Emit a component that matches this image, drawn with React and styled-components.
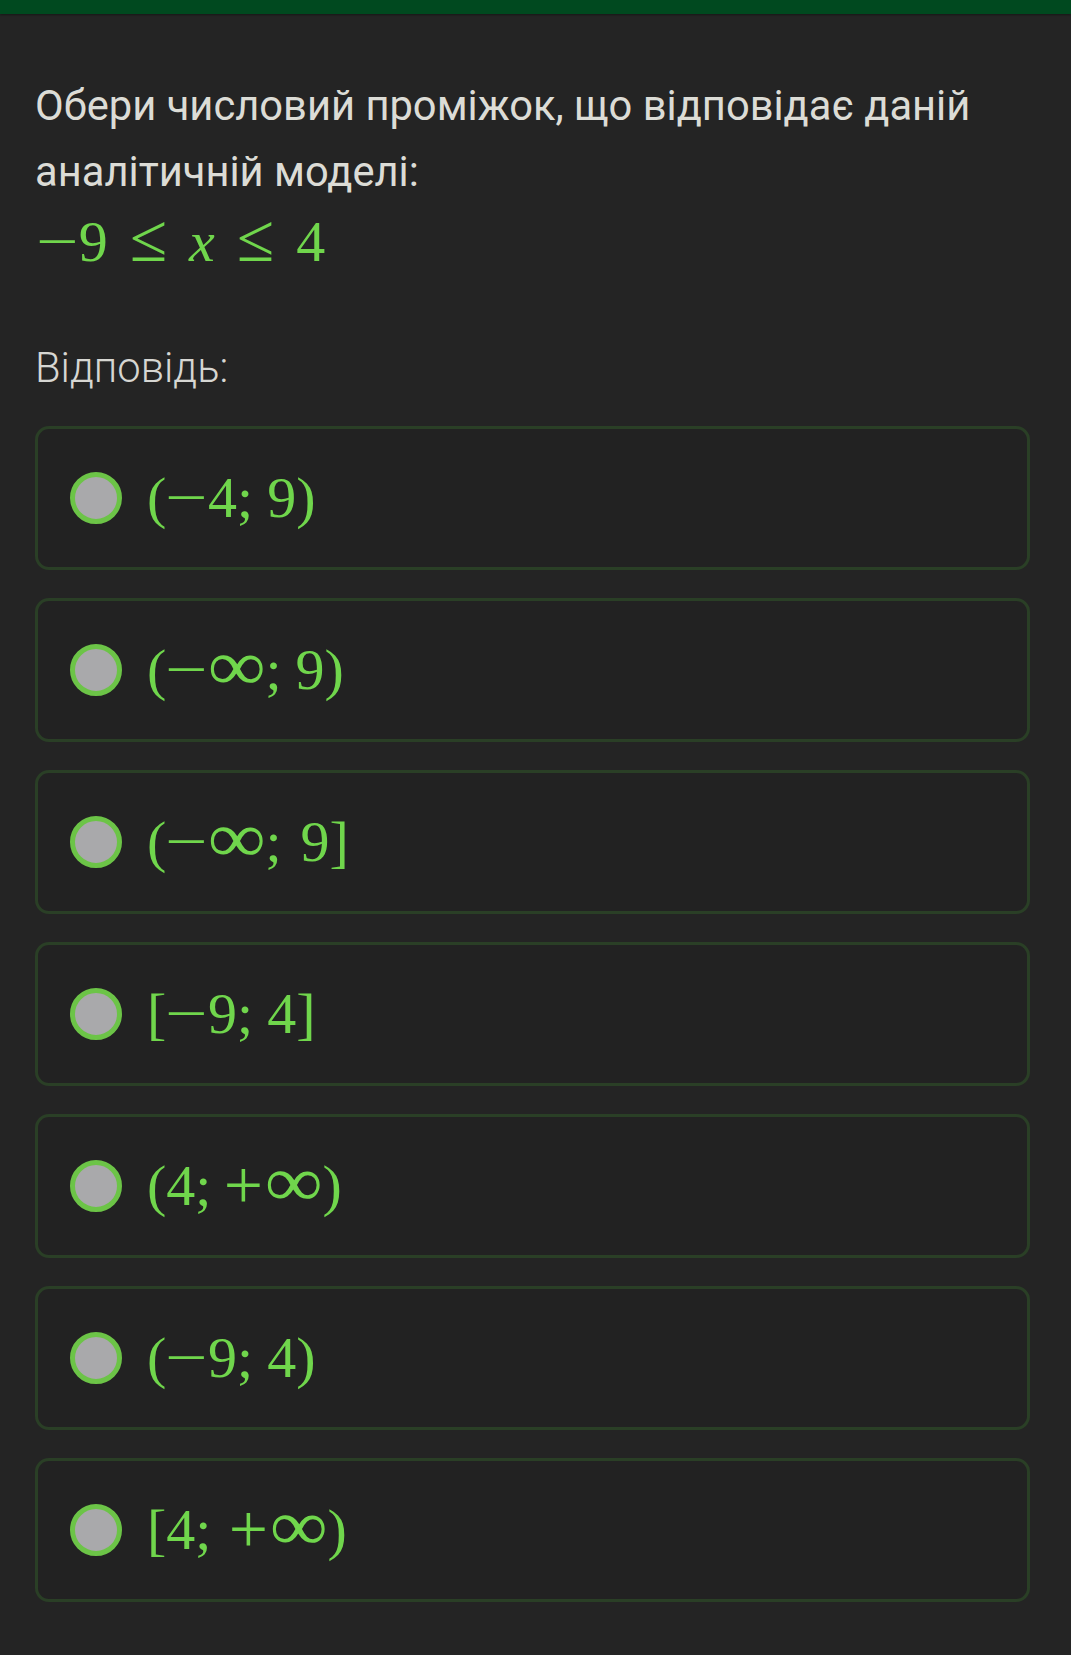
import styled, { createGlobalStyle } from "styled-components";

const GlobalStyle = createGlobalStyle`
  html, body {
    margin: 0;
    padding: 0;
    background: #242424;
  }
  * {
    box-sizing: border-box;
  }
`;

// tokens: "-" minus, "+" plus, "inf" infinity,
// ";" semicolon, ";;" semicolon with a wider space, anything else is plain text
const options = [
  { id: "a", parts: ["(", "-", "4", ";", "9", ")"] },
  { id: "b", parts: ["(", "-", "inf", ";", "9", ")"] },
  { id: "c", parts: ["(", "-", "inf", ";;", "9", "]"] },
  { id: "d", parts: ["[", "-", "9", ";", "4", "]"] },
  { id: "e", parts: ["(", "4", ";", "+", "inf", ")"] },
  { id: "f", parts: ["(", "-", "9", ";", "4", ")"] },
  { id: "g", parts: ["[", "4", ";;", "+", "inf", ")"] },
];

const Token = ({ t }) => {
  if (t === "-") return <Minus>−</Minus>;
  if (t === "+") return <Plus>+</Plus>;
  if (t === "inf") return <Inf>∞</Inf>;
  if (t === ";" || t === ";;") return <Semi $wide={t === ";;"}>;</Semi>;
  return <Sym>{t}</Sym>;
};

const App = () => {
  return (
    <Page>
      <GlobalStyle />
      <TopBar />
      <Content>
        <Question>
          Обери числовий проміжок, що відповідає даній аналітичній моделі:
        </Question>
        <MathLine>
          <Minus>−</Minus>
          <Sym>9</Sym>
          <Rel>≤</Rel>
          <Var>x</Var>
          <Rel>≤</Rel>
          <Sym>4</Sym>
        </MathLine>
        <Label>Відповідь:</Label>
        <OptionList>
          {options.map((opt) => (
            <Card key={opt.id}>
              <Radio />
              <Formula>
                {opt.parts.map((p, i) => (
                  <Token key={i} t={p} />
                ))}
              </Formula>
            </Card>
          ))}
        </OptionList>
      </Content>
    </Page>
  );
};

export default App;

const Page = styled.div`
  min-height: 1655px;
  background: #242424;
`;

const TopBar = styled.div`
  height: 14px;
  background: #00491f;
  box-shadow: 0 1px 2px rgba(0, 0, 0, 0.4);
`;

const Content = styled.main`
  padding: 59px 41px 40px 35px;
`;

const Question = styled.p`
  margin: 0;
  font-family: Roboto, "Noto Sans", sans-serif;
  font-size: 41.7px;
  line-height: 66px;
  color: #dcdcd6;
`;

const MathLine = styled.div`
  display: flex;
  align-items: baseline;
  height: 66px;
  font-family: "Liberation Serif", "DejaVu Serif", serif;
  font-size: 58px;
  line-height: 66px;
  color: #70d64c;
  margin-left: 2px;
`;

const Sym = styled.span`
  white-space: pre;
`;

const Minus = styled.span`
  display: inline-block;
  transform: scaleX(1.3);
  margin: 0 5px 0 4px;
`;

const Plus = styled.span`
  display: inline-block;
  transform: scale(1.2);
  margin: 0 5px 0 2px;
`;

const Inf = styled.span`
  display: inline-block;
  transform: scale(1.4, 1.25);
  transform-origin: 50% 70%;
  margin: 0 8px;
`;

const Rel = styled.span`
  font-size: 68px;
  line-height: 66px;
  margin: 0 22px;
`;

const Var = styled.span`
  font-style: italic;
`;

const Label = styled.div`
  margin-top: 64px;
  font-family: Roboto, "Noto Sans", sans-serif;
  font-weight: 300;
  font-size: 41.7px;
  line-height: 66px;
  color: #d6d6d2;
`;

const OptionList = styled.div`
  display: flex;
  flex-direction: column;
  gap: 28px;
  margin-top: 25px;
`;

const Card = styled.label`
  display: flex;
  align-items: center;
  gap: 25px;
  height: 144px;
  padding: 0 32px;
  border: 3px solid #2a3f26;
  border-radius: 14px;
  background: #222222;
`;

const Radio = styled.span`
  width: 52px;
  height: 52px;
  flex-shrink: 0;
  border-radius: 50%;
  border: 5px solid #6cc447;
  background: #a9a9ab;
`;

const Formula = styled.div`
  display: flex;
  align-items: baseline;
  font-family: "Liberation Serif", "DejaVu Serif", serif;
  font-size: 58px;
  line-height: 66px;
  color: #70d64c;
`;

const Semi = styled.span`
  margin-right: ${(p) => (p.$wide ? "19px" : "14px")};
`;
